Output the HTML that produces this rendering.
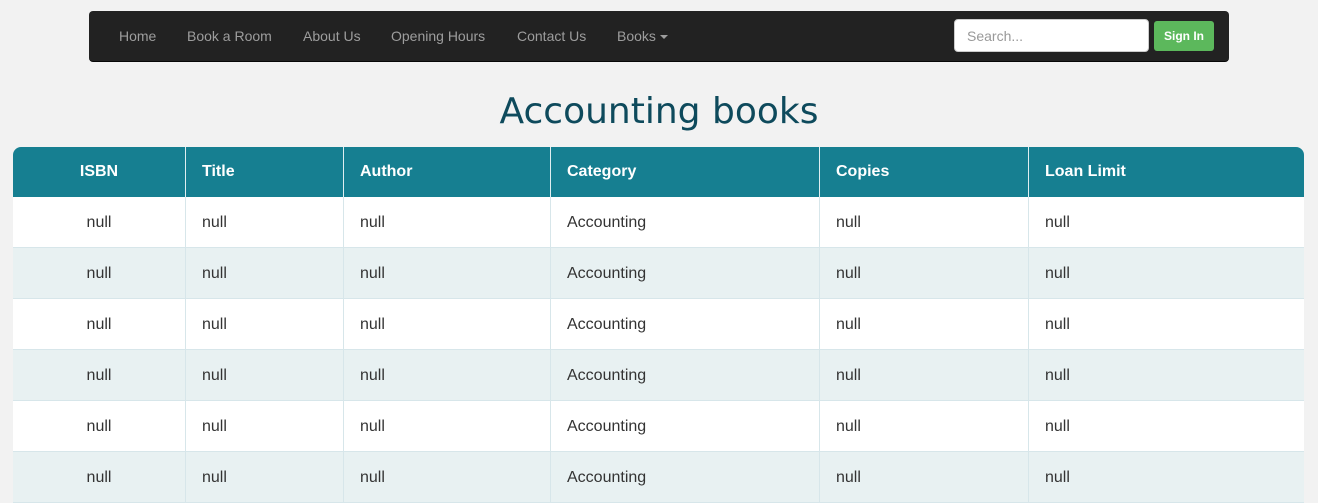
<!DOCTYPE html>
<html><head><style>
body{margin:0;background:#f2f2f2;font-family:"Liberation Sans",Arial,sans-serif;width:1318px;height:464px;overflow:hidden;position:relative}
.nav{position:absolute;left:89px;top:11px;width:1140px;height:51px;background:#222;border-radius:4px;border-bottom:1px solid #080808;box-sizing:border-box}
.nav a{position:absolute;top:17px;color:#9d9d9d;font-size:14px;text-decoration:none}
.caret{display:inline-block;width:0;height:0;border-left:4px solid transparent;border-right:4px solid transparent;border-top:4px solid #9d9d9d;vertical-align:middle;margin-left:4px}
.search{position:absolute;left:865px;top:8px;width:195px;height:33px;background:#fff;border:1px solid #ccc;border-radius:4px;box-sizing:border-box;color:#999;font-size:14px;padding:8px 12px}
.btn{position:absolute;left:1065px;top:10px;width:60px;height:30px;background:#5cb85c;border-radius:3px;color:#fff;font-size:12px;font-weight:bold;text-align:center;line-height:30px}
h1{position:absolute;left:0;width:1318px;top:91px;margin:0;text-align:center;font-weight:normal;font-size:36px;color:#0e4a5c;font-family:"DejaVu Sans","Liberation Sans",sans-serif}
table{position:absolute;left:13px;top:147px;width:1291px;border-collapse:separate;border-spacing:0;font-size:16px}
th{background:#167f91;color:#fff;height:50px;text-align:left;padding:0 0 0 16px;box-sizing:border-box;font-weight:bold;border-left:1px solid #e0eef0}
th:first-child{border-left:none;border-top-left-radius:8px;text-align:center;padding:0}
th:last-child{border-top-right-radius:8px}
td{height:51px;box-sizing:border-box;padding:1px 0 0 16px;color:#333;border-left:1px solid #d7e6ea;border-bottom:1px solid #d7e6ea;background:#fff}
td:first-child{border-left:none;text-align:center;padding:1px 0 0 0}
tr:nth-child(odd) td{background:#e8f1f2}
</style></head><body>
<div class="nav">
<a style="left:30px">Home</a><a style="left:98px">Book a Room</a><a style="left:214px">About Us</a><a style="left:302px">Opening Hours</a><a style="left:428px">Contact Us</a><a style="left:528px">Books<span class="caret"></span></a>
<div class="search">Search...</div><div class="btn">Sign In</div>
</div>
<h1>Accounting books</h1>
<table>
<tr><th style="width:172px">ISBN</th><th style="width:158px">Title</th><th style="width:207px">Author</th><th style="width:269px">Category</th><th style="width:209px">Copies</th><th>Loan Limit</th></tr>
<tr><td>null</td><td>null</td><td>null</td><td>Accounting</td><td>null</td><td>null</td></tr>
<tr><td>null</td><td>null</td><td>null</td><td>Accounting</td><td>null</td><td>null</td></tr>
<tr><td>null</td><td>null</td><td>null</td><td>Accounting</td><td>null</td><td>null</td></tr>
<tr><td>null</td><td>null</td><td>null</td><td>Accounting</td><td>null</td><td>null</td></tr>
<tr><td>null</td><td>null</td><td>null</td><td>Accounting</td><td>null</td><td>null</td></tr>
<tr><td>null</td><td>null</td><td>null</td><td>Accounting</td><td>null</td><td>null</td></tr>
</table>
</body></html>
